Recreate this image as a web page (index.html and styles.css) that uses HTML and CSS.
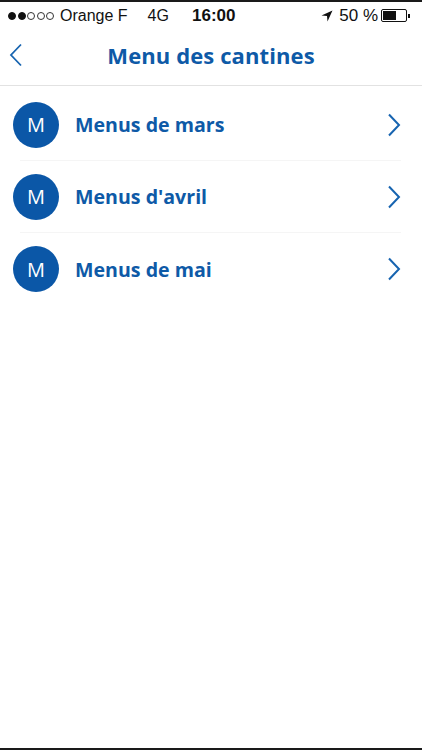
FILE: index.html
```html
<!DOCTYPE html>
<html lang="fr">
<head>
    <meta charset="UTF-8">
    <meta name="viewport" content="width=device-width, initial-scale=1.0">
    <title>Menu des cantines</title>
    <link rel="stylesheet" href="styles.css">
</head>
<body>
    <div class="screen">
        <!-- Status Bar -->
        <div class="status-bar">
            <div class="status-left">
                <span class="signal">
                    <i class="dot on"></i><i class="dot on"></i><i class="dot"></i><i class="dot"></i><i class="dot"></i>
                </span>
                <span class="carrier">Orange F</span>
                <span class="network">4G</span>
            </div>
            <div class="status-time">16:00</div>
            <div class="status-right">
                <svg class="location" width="12" height="12" viewBox="0 0 12 12">
                    <path d="M11.5 0.5 L0.5 5.5 L6 6 L6.5 11.5 Z" fill="#111"/>
                </svg>
                <span class="battery-text">50 %</span>
                <span class="battery"><span class="battery-level"></span></span>
                <span class="battery-tip"></span>
            </div>
        </div>

        <!-- Navigation Bar -->
        <div class="nav-bar">
            <svg class="back" width="14" height="24" viewBox="0 0 14 24">
                <path d="M12 1.5 L2 12 L12 22.5" fill="none" stroke="#1764b0" stroke-width="1.8"/>
            </svg>
            <h1>Menu des cantines</h1>
        </div>

        <!-- Month List -->
        <ul class="menu-list">
            <li class="menu-item">
                <span class="avatar">M</span>
                <span class="label">Menus de mars</span>
                <svg class="chevron" width="14" height="24" viewBox="0 0 14 24">
                    <path d="M2 1.5 L12 12 L2 22.5" fill="none" stroke="#1764b0" stroke-width="2"/>
                </svg>
            </li>
            <li class="menu-item">
                <span class="avatar">M</span>
                <span class="label">Menus d'avril</span>
                <svg class="chevron" width="14" height="24" viewBox="0 0 14 24">
                    <path d="M2 1.5 L12 12 L2 22.5" fill="none" stroke="#1764b0" stroke-width="2"/>
                </svg>
            </li>
            <li class="menu-item">
                <span class="avatar">M</span>
                <span class="label">Menus de mai</span>
                <svg class="chevron" width="14" height="24" viewBox="0 0 14 24">
                    <path d="M2 1.5 L12 12 L2 22.5" fill="none" stroke="#1764b0" stroke-width="2"/>
                </svg>
            </li>
        </ul>
    </div>
</body>
</html>
```

FILE: styles.css
```css
/* General Styling */
body {
    margin: 0;
    padding: 0;
    background-color: #ffffff;
    font-family: 'Liberation Sans', Arial, sans-serif;
}

.screen {
    width: 422px;
    height: 750px;
    box-sizing: border-box;
    border-top: 2px solid #1a1a1a;
    border-bottom: 2px solid #1a1a1a;
    overflow: hidden;
    background: #fff;
}

/* Status Bar */
.status-bar {
    height: 27px;
    display: flex;
    align-items: center;
    justify-content: space-between;
    padding: 0 12px 0 8px;
    font-size: 16px;
    color: #111;
    position: relative;
}

.status-left {
    display: flex;
    align-items: center;
}

.signal {
    display: flex;
    gap: 1.5px;
    margin-right: 6px;
}

.dot {
    width: 8px;
    height: 8px;
    border-radius: 50%;
    border: 1px solid #333;
    box-sizing: border-box;
}

.dot.on {
    background: #111;
    border-color: #111;
}

.network {
    margin-left: 20px;
}

.status-time {
    position: absolute;
    left: 192px;
    font-weight: bold;
    font-size: 17px;
}

.status-right {
    display: flex;
    align-items: center;
}

.location {
    margin-right: 6px;
}

.battery-text {
    margin-right: 3px;
    font-size: 17px;
}

.battery {
    width: 26px;
    height: 13px;
    border: 1px solid #111;
    border-radius: 2px;
    box-sizing: border-box;
    padding: 1px;
    display: flex;
}

.battery-level {
    width: 13px;
    background: #111;
}

.battery-tip {
    width: 2px;
    height: 4px;
    background: #111;
    margin-left: 1px;
}

/* Navigation Bar */
.nav-bar {
    height: 57px;
    box-sizing: border-box;
    padding-bottom: 4px;
    display: flex;
    align-items: center;
    justify-content: center;
    position: relative;
    border-bottom: 1px solid #e2e2e2;
}

.back {
    position: absolute;
    left: 9px;
    top: 14px;
}

h1 {
    margin: 0;
    font-family: 'Open Sans', sans-serif;
    font-size: 22px;
    font-weight: 700;
    color: #0e5aa7;
    letter-spacing: 0.1px;
}

/* Month List */
.menu-list {
    list-style: none;
    margin: 0;
    padding: 3px 0 0 12px;
}

.menu-item {
    height: 72px;
    box-sizing: border-box;
    display: flex;
    align-items: center;
    border-bottom: 1px solid #f5f5f5;
    margin-right: 21px;
    margin-left: 8px;
}

.menu-item:last-child {
    border-bottom: none;
}

.avatar {
    width: 46px;
    height: 46px;
    border-radius: 50%;
    background: #0b57a7;
    color: #fff;
    display: flex;
    align-items: center;
    justify-content: center;
    font-family: 'Open Sans', sans-serif;
    font-size: 20px;
    margin-left: -7px;
    flex-shrink: 0;
}

.label {
    flex: 1;
    margin-left: 16px;
    font-family: 'Open Sans', sans-serif;
    font-size: 19.6px;
    font-weight: 700;
    color: #0e5aa7;
}

.chevron {
    flex-shrink: 0;
}
```
